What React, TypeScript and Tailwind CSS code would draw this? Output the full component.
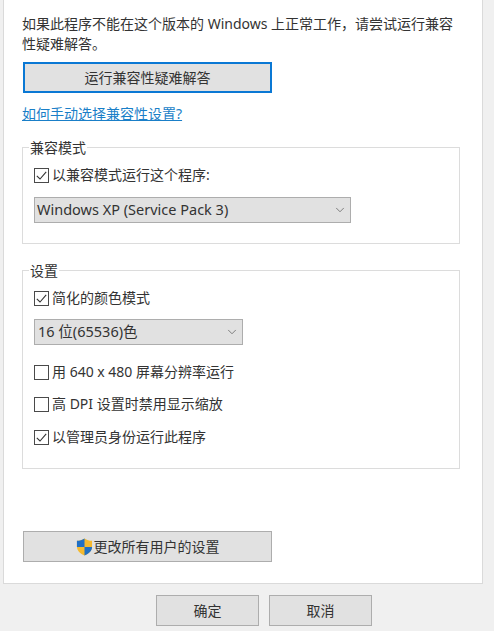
import { ChevronDown } from 'lucide-react';

const FONT = "font-['Noto_Sans','Noto_Sans_CJK_SC',sans-serif]";

function CheckRow({ label, checked, className }: { label: string; checked?: boolean; className?: string }) {
  return (
    <div className={`flex h-[14px] items-center gap-[3px] ${className ?? ''}`}>
      <span className="flex h-[15px] w-[15px] shrink-0 items-center justify-center border border-[#4a4a4a] bg-white">
        {checked && (
          <svg width="13" height="13" viewBox="0 0 13 13" fill="none" aria-hidden>
            <path d="M1.8 6.8 L5 10 L11.2 2.8" stroke="#333" strokeWidth="1.1" />
          </svg>
        )}
      </span>
      <span className="text-[14px] leading-[14px] text-[#333]">{label}</span>
    </div>
  );
}

function Dropdown({ value, className }: { value: string; className: string }) {
  return (
    <div className={`flex h-[26px] items-center justify-between border border-[#adadad] bg-[#e1e1e1] pr-[3px] text-[14.5px] text-[#333] ${className}`}>
      <span>{value}</span>
      <ChevronDown className="h-[14px] w-[14px] text-[#555]" strokeWidth={1.2} aria-hidden />
    </div>
  );
}

function Group({ title, className, children }: { title: string; className: string; children: React.ReactNode }) {
  return (
    <div className={`relative w-[438px] border border-[#dcdcdc] pl-[11px] ${className}`}>
      <span className="absolute left-[6px] top-[-10px] bg-white px-px text-[14px] leading-[20px] text-[#333]">{title}</span>
      {children}
    </div>
  );
}

function ShieldIcon() {
  return (
    <svg width="17" height="18" viewBox="0 0 18 19" className="mr-px" aria-hidden>
      <path d="M9 .5 C11.5 2.2 14 3 17 3 V9 C17 13.5 13.5 16.8 9 18.5 C4.5 16.8 1 13.5 1 9 V3 C4 3 6.5 2.2 9 .5 Z" fill="#f4b92f" />
      <path d="M9 .5 V9.5 H1 V3 C4 3 6.5 2.2 9 .5 Z" fill="#1f6fc4" />
      <path d="M9 9.5 H17 C17 13.5 13.5 16.8 9 18.5 Z" fill="#1f6fc4" />
    </svg>
  );
}

export default function App() {
  return (
    <div className={`flex h-[631px] w-[494px] flex-col overflow-hidden bg-[#f0f0f0] ${FONT}`}>
      <div className="ml-[3px] h-[584px] w-[480px] border-x border-b border-[#dadada] bg-white pl-[18px]">
        <p className="w-[440px] pt-[14px] text-[14px] leading-[20px] text-[#333]">
          如果此程序不能在这个版本的 Windows 上正常工作，请尝试运行兼容性疑难解答。
        </p>
        <button
          type="button"
          className="ml-px mt-[8px] block h-[31px] w-[249px] border-2 border-[#0a78d4] bg-[#e1e1e1] text-[14px] text-[#333]"
        >
          运行兼容性疑难解答
        </button>
        <a href="#" className="mt-[11px] block text-[14px] leading-[20px] text-[#1a7fc8] underline">
          如何手动选择兼容性设置?
        </a>

        <Group title="兼容模式" className="mt-[23px] h-[97px] pt-[20px]">
          <CheckRow label="以兼容模式运行这个程序:" checked />
          <Dropdown value="Windows XP (Service Pack 3)" className="mt-[15px] w-[317px] pl-[2px]" />
        </Group>

        <Group title="设置" className="mt-[26px] h-[199px] pt-[20px]">
          <CheckRow label="简化的颜色模式" checked />
          <Dropdown value="16 位(65536)色" className="mt-[14px] w-[209px] pl-[3px]" />
          <CheckRow label="用 640 x 480 屏幕分辨率运行" className="mt-[20px]" />
          <CheckRow label="高 DPI 设置时禁用显示缩放" className="mt-[18px]" />
          <CheckRow label="以管理员身份运行此程序" checked className="mt-[19px]" />
        </Group>

        <button
          type="button"
          className="ml-px mt-[62px] flex h-[31px] w-[249px] items-center justify-center border border-[#adadad] bg-[#e1e1e1] text-[14px] text-[#333]"
        >
          <ShieldIcon />
          <span>更改所有用户的设置</span>
        </button>
      </div>

      <div className="flex gap-[10px] pl-[156px] pt-[11px]">
        <button type="button" className="h-[31px] w-[103px] border border-[#adadad] bg-[#e1e1e1] text-[14px] text-[#333]">
          确定
        </button>
        <button type="button" className="h-[31px] w-[103px] border border-[#adadad] bg-[#e1e1e1] text-[14px] text-[#333]">
          取消
        </button>
      </div>
    </div>
  );
}
